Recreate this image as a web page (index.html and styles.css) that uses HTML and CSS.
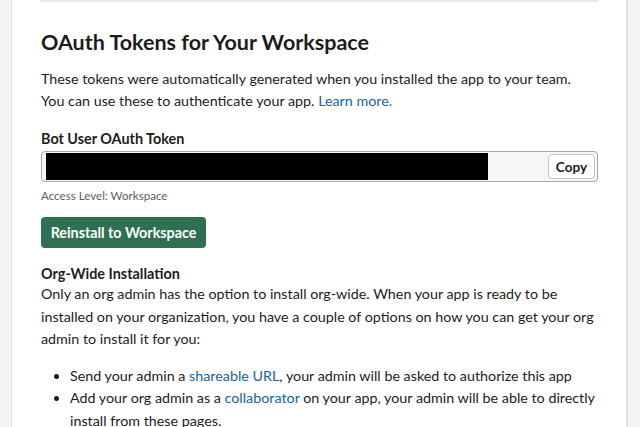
FILE: index.html
```html
<!DOCTYPE html>
<html>
<head>
<meta charset="utf-8">
<link rel="stylesheet" href="styles.css">
</head>
<body>
<div class="card">
  <div class="rule"></div>
  <h2 class="title">OAuth Tokens for Your Workspace</h2>
  <p class="text intro">These tokens were automatically generated when you installed the app to your team.<br>You can use these to authenticate your app. <a class="link" href="#">Learn more.</a></p>
  <div class="label">Bot User OAuth Token</div>
  <div class="token">
    <div class="redact"></div>
    <button class="copy">Copy</button>
  </div>
  <div class="hint">Access Level: Workspace</div>
  <button class="primary">Reinstall to Workspace</button>
  <div class="subhead">Org-Wide Installation</div>
  <p class="text org">Only an org admin has the option to install org-wide. When your app is ready to be installed on your organization, you have a couple of options on how you can get your org admin to install it for you:</p>
  <ul class="list">
    <li>Send your admin a <a class="link" href="#">shareable URL</a>, your admin will be asked to authorize this app</li>
    <li>Add your org admin as a <a class="link" href="#">collaborator</a> on your app, your admin will be able to directly install from these pages.</li>
  </ul>
</div>
</body>
</html>
```

FILE: styles.css
```css
html, body {
  margin: 0;
  padding: 0;
  background: #f4f4f4;
  font-family: Lato, "Open Sans", sans-serif;
  color: #1d1c1d;
  overflow: hidden;
}
.card {
  margin: 0 12px 0 11px;
  background: #fff;
  border-left: 1px solid #e2e2e2;
  border-right: 2px solid #e2e2e2;
  padding: 0 28px 0 29px;
  height: 427px;
  box-sizing: border-box;
}
.rule {
  height: 2px;
  background: #e8e8e8;
}
.title {
  margin: 26px 0 0;
  font-size: 21.5px;
  line-height: 28px;
  font-weight: 700;
}
.text {
  margin: 0;
  font-size: 14.3px;
  line-height: 22px;
}
.text.intro {
  margin-top: 12px;
}
.link {
  color: #1264a3;
  text-decoration: none;
}
.label {
  margin-top: 16px;
  font-size: 14.4px;
  line-height: 22px;
  font-weight: 700;
}
.token {
  margin-top: 1px;
  height: 29px;
  border: 1px solid #a8a8a8;
  border-radius: 4px;
  background: #f6f6f6;
  display: flex;
  align-items: center;
  padding: 0 2px 0 4px;
}
.redact {
  width: 442px;
  height: 27px;
  background: #000;
}
.copy {
  margin-left: auto;
  height: 25px;
  padding: 0 7px;
  border: 1px solid #c4c4c4;
  border-radius: 4px;
  background: #fff;
  font-family: Lato, sans-serif;
  font-weight: 700;
  font-size: 13.5px;
  color: #1d1c1d;
}
.hint {
  margin-top: 6px;
  font-size: 11.6px;
  line-height: 16px;
  color: #616061;
}
.primary {
  display: block;
  margin-top: 13px;
  width: 165px;
  height: 31px;
  border: none;
  border-radius: 4px;
  background: #2f6f52;
  color: #fff;
  font-family: Lato, sans-serif;
  font-weight: 700;
  font-size: 14.3px;
  padding: 0;
}
.subhead {
  margin-top: 15px;
  font-size: 14.4px;
  line-height: 22px;
  font-weight: 700;
}
.text.org {
  margin-top: -2px;
  line-height: 22.5px;
}
.list {
  margin: 14px 0 0;
  padding-left: 29px;
  font-size: 14.3px;
  line-height: 22.5px;
}
```
